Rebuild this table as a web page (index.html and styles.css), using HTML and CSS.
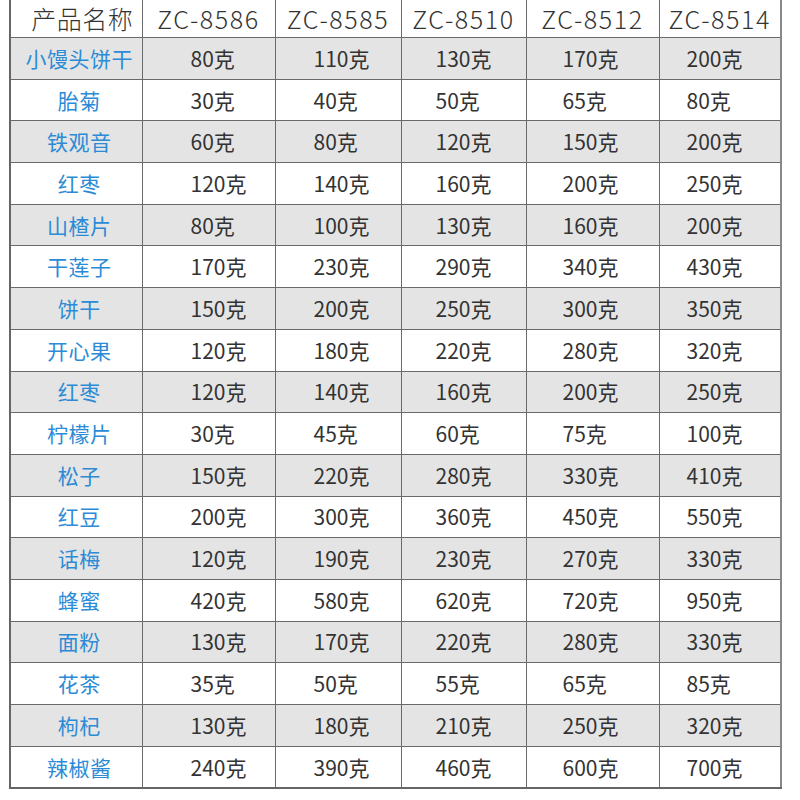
FILE: index.html
```html
<!DOCTYPE html>
<html lang="zh">
<head>
<meta charset="utf-8">
<title>产品名称</title>
<link rel="stylesheet" href="styles.css">
</head>
<body>
<table class="spec">
<colgroup>
<col class="c0"><col class="c1"><col class="c2"><col class="c3"><col class="c4"><col class="c5">
</colgroup>
<thead>
<tr class="head"><th class="name">产品名称</th><th>ZC-8586</th><th>ZC-8585</th><th>ZC-8510</th><th>ZC-8512</th><th>ZC-8514</th></tr>
</thead>
<tbody>
<tr class="alt"><td class="name">小馒头饼干</td><td>80克</td><td>110克</td><td>130克</td><td>170克</td><td>200克</td></tr>
<tr><td class="name">胎菊</td><td>30克</td><td>40克</td><td>50克</td><td>65克</td><td>80克</td></tr>
<tr class="alt"><td class="name">铁观音</td><td>60克</td><td>80克</td><td>120克</td><td>150克</td><td>200克</td></tr>
<tr><td class="name">红枣</td><td>120克</td><td>140克</td><td>160克</td><td>200克</td><td>250克</td></tr>
<tr class="alt"><td class="name">山楂片</td><td>80克</td><td>100克</td><td>130克</td><td>160克</td><td>200克</td></tr>
<tr><td class="name">干莲子</td><td>170克</td><td>230克</td><td>290克</td><td>340克</td><td>430克</td></tr>
<tr class="alt"><td class="name">饼干</td><td>150克</td><td>200克</td><td>250克</td><td>300克</td><td>350克</td></tr>
<tr><td class="name">开心果</td><td>120克</td><td>180克</td><td>220克</td><td>280克</td><td>320克</td></tr>
<tr class="alt"><td class="name">红枣</td><td>120克</td><td>140克</td><td>160克</td><td>200克</td><td>250克</td></tr>
<tr><td class="name">柠檬片</td><td>30克</td><td>45克</td><td>60克</td><td>75克</td><td>100克</td></tr>
<tr class="alt"><td class="name">松子</td><td>150克</td><td>220克</td><td>280克</td><td>330克</td><td>410克</td></tr>
<tr><td class="name">红豆</td><td>200克</td><td>300克</td><td>360克</td><td>450克</td><td>550克</td></tr>
<tr class="alt"><td class="name">话梅</td><td>120克</td><td>190克</td><td>230克</td><td>270克</td><td>330克</td></tr>
<tr><td class="name">蜂蜜</td><td>420克</td><td>580克</td><td>620克</td><td>720克</td><td>950克</td></tr>
<tr class="alt"><td class="name">面粉</td><td>130克</td><td>170克</td><td>220克</td><td>280克</td><td>330克</td></tr>
<tr><td class="name">花茶</td><td>35克</td><td>50克</td><td>55克</td><td>65克</td><td>85克</td></tr>
<tr class="alt"><td class="name">枸杞</td><td>130克</td><td>180克</td><td>210克</td><td>250克</td><td>320克</td></tr>
<tr><td class="name">辣椒酱</td><td>240克</td><td>390克</td><td>460克</td><td>600克</td><td>700克</td></tr>
</tbody>
</table>
</body>
</html>
```

FILE: styles.css
```css
html, body {
  margin: 0;
  padding: 0;
  background: #ffffff;
}

body {
  font-family: "Noto Sans CJK SC", "Noto Sans", sans-serif;
  color: #333333;
  overflow: hidden;
}

.spec {
  border-collapse: collapse;
  table-layout: fixed;
  width: 771px;
  margin: -2px 0 0 9px;
  border-left: 2px solid #666666;
  border-right: 2px solid #888888;
  border-bottom: 2px solid #666666;
}

.c0 { width: 132px; }
.c1 { width: 133px; }
.c2 { width: 126px; }
.c3 { width: 125px; }
.c4 { width: 133px; }
.c5 { width: 122px; }

.spec th,
.spec td {
  border: 1px solid #6a6a6a;
  padding: 0;
  white-space: nowrap;
  overflow: hidden;
}

.head th {
  height: 38px;
  font-size: 25px;
  font-weight: 300;
  line-height: 1;
  text-align: center;
  color: #333333;
  letter-spacing: 1.6px;
}

.head th.name {
  padding-left: 12px;
  letter-spacing: 0.5px;
}

.spec td {
  height: 40.7px;
  font-size: 21px;
  line-height: 1;
  text-align: left;
  color: #333333;
}

.spec td:nth-child(2) { padding-left: 48px; }
.spec td:nth-child(3) { padding-left: 38px; }
.spec td:nth-child(4) { padding-left: 34px; }
.spec td:nth-child(5) { padding-left: 36px; }
.spec td:nth-child(6) { padding-left: 27px; }

.spec td.name {
  text-align: center;
  color: #2b8bd6;
  padding-left: 6px;
  letter-spacing: 0.5px;
}

.alt td {
  background: #e4e4e4;
}
```
